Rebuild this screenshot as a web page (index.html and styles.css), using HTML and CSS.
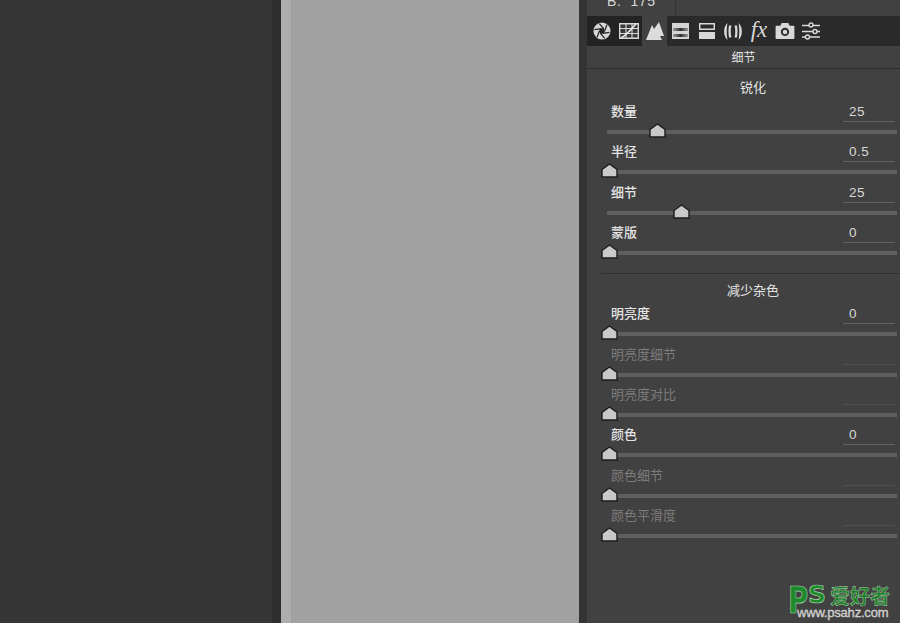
FILE: index.html
```html
<!DOCTYPE html>
<html lang="zh">
<head>
    <meta charset="UTF-8">
    <title>细节</title>
    <link rel="stylesheet" href="styles.css">
</head>
<body>
    <div class="left-area"></div>
    <div class="left-gutter"></div>
    <div class="canvas-edge"></div>
    <div class="canvas"></div>
    <div class="right-gutter"></div>

    <div class="panel">
        <!-- RGB readout -->
        <div class="readout"><span class="readout-text">B:&nbsp;&nbsp;175</span></div>

        <!-- Tabs -->
        <div class="tabs">
            <div class="tab tab-first">
                <svg width="18" height="18" viewBox="0 0 20 20">
                    <circle cx="10" cy="10" r="9.5" fill="#d8d8d8"/>
                    <circle cx="10" cy="10" r="3" fill="#242424"/>
                    <g stroke="#242424" stroke-width="1.3" fill="none">
                        <path d="M12 7.5L7 1.8M12.8 10.3L15.5 3M10.8 12.7L18.3 11.5M8 12.4L13 18.3M7.2 9.7L4.5 17M9.2 7.3L1.7 8.5"/>
                    </g>
                </svg>
            </div>
            <div class="tab tab-second">
                <svg width="20" height="16" viewBox="0 0 20 16">
                    <path d="M.7.7h18.6v14.6H.7z" fill="#3a3a3a" stroke="#d8d8d8" stroke-width="1.4"/>
                    <path d="M1 5.5h18M1 10.5h18M7 1v14M13 1v14" stroke="#d8d8d8" stroke-width="1.1"/>
                    <path d="M2 15C8 12 12 6 17 1" stroke="#eee" stroke-width="1.6" fill="none"/>
                </svg>
            </div>
            <div class="tab tab-active">
                <svg width="18" height="18" viewBox="0 0 18 18">
                    <path d="M0 18L6 3l2 4 5-7 5 14h-4l2 4z" fill="#dcdcdc"/>
                </svg>
            </div>
            <div class="tab tab-wide">
                <svg width="17" height="16" viewBox="0 0 17 16">
                    <defs>
                        <linearGradient id="hslBand" x1="0" y1="0" x2="1" y2="0">
                            <stop offset="0" stop-color="#9a9a9a"/>
                            <stop offset="0.5" stop-color="#2e2e2e"/>
                            <stop offset="1" stop-color="#9a9a9a"/>
                        </linearGradient>
                    </defs>
                    <rect width="17" height="16" fill="#d4d4d4"/>
                    <rect x="1" y="5" width="15" height="3" fill="url(#hslBand)"/>
                    <rect x="1" y="11" width="15" height="3" fill="url(#hslBand)"/>
                </svg>
            </div>
            <div class="tab">
                <svg width="16" height="16" viewBox="0 0 16 16">
                    <rect x="0.75" y="0.75" width="14.5" height="5.5" fill="#2a2a2a" stroke="#d8d8d8" stroke-width="1.5"/>
                    <rect y="9" width="16" height="7" fill="#d8d8d8"/>
                </svg>
            </div>
            <div class="tab">
                <svg width="18" height="17" viewBox="0 0 18 17" fill="#d8d8d8">
                    <path d="M3.5 0C-1 4-1 13 3.5 17 2.500 12 2.500 5 3.500 0z"/>
                    <path d="M14.500 0C19 4 19 13 14.500 17 15.500 12 15.500 5 14.500 0z"/>
                    <path d="M5 2.500h2.500C6.500 6 6.500 11 7.500 14.500H5C4.300 11 4.300 6 5 2.500z"/>
                    <path d="M13 2.500h-2.500c1 3.500 1 8.500 0 12H13c.7-3.500.7-8.500 0-12z"/>
                </svg>
            </div>
            <div class="tab tab-fx">fx</div>
            <div class="tab">
                <svg width="20" height="16" viewBox="0 0 20 17">
                    <path d="M1 3h4l1.500-3h7L15 3h4a1 1 0 0 1 1 1v12a1 1 0 0 1-1 1H1a1 1 0 0 1-1-1V4a1 1 0 0 1 1-1z" fill="#d8d8d8"/>
                    <circle cx="10" cy="9.500" r="4.400" fill="#2a2a2a"/>
                    <circle cx="10" cy="9.500" r="2.400" fill="#d8d8d8"/>
                </svg>
            </div>
            <div class="tab">
                <svg width="18" height="18" viewBox="0 0 18 18" fill="#2a2a2a" stroke="#d8d8d8" stroke-width="1.4">
                    <path d="M0 3.500h18M0 9.500h18M0 15h18"/>
                    <circle cx="9" cy="3" r="2"/>
                    <circle cx="13" cy="9.500" r="2"/>
                    <circle cx="5.500" cy="15" r="2"/>
                </svg>
            </div>
        </div>

        <div class="panel-title">细节</div>

        <!-- Sharpening -->
        <div class="group">
            <div class="group-title">锐化</div>
            <div class="row">
                <div class="row-head"><span class="label">数量</span><span class="value">25</span></div>
                <div class="track"><svg class="thumb" style="left: 42px" width="17" height="15" viewBox="0 0 17 15"><path d="M1 14V6.500L8.500 1 16 6.500V14z"/></svg></div>
            </div>
            <div class="row">
                <div class="row-head"><span class="label">半径</span><span class="value">0.5</span></div>
                <div class="track"><svg class="thumb" style="left: -6px" width="17" height="15" viewBox="0 0 17 15"><path d="M1 14V6.500L8.500 1 16 6.500V14z"/></svg></div>
            </div>
            <div class="row">
                <div class="row-head"><span class="label">细节</span><span class="value">25</span></div>
                <div class="track"><svg class="thumb" style="left: 66px" width="17" height="15" viewBox="0 0 17 15"><path d="M1 14V6.500L8.500 1 16 6.500V14z"/></svg></div>
            </div>
            <div class="row">
                <div class="row-head"><span class="label">蒙版</span><span class="value">0</span></div>
                <div class="track"><svg class="thumb" style="left: -6px" width="17" height="15" viewBox="0 0 17 15"><path d="M1 14V6.500L8.500 1 16 6.500V14z"/></svg></div>
            </div>
        </div>

        <div class="group-line"></div>

        <!-- Noise reduction -->
        <div class="group">
            <div class="group-title group-title-noise">减少杂色</div>
            <div class="row">
                <div class="row-head"><span class="label">明亮度</span><span class="value">0</span></div>
                <div class="track"><svg class="thumb" style="left: -6px" width="17" height="15" viewBox="0 0 17 15"><path d="M1 14V6.500L8.500 1 16 6.500V14z"/></svg></div>
            </div>
            <div class="row row-off">
                <div class="row-head"><span class="label">明亮度细节</span><span class="value"></span></div>
                <div class="track"><svg class="thumb" style="left: -6px" width="17" height="15" viewBox="0 0 17 15"><path d="M1 14V6.500L8.500 1 16 6.500V14z"/></svg></div>
            </div>
            <div class="row row-off">
                <div class="row-head"><span class="label">明亮度对比</span><span class="value"></span></div>
                <div class="track"><svg class="thumb" style="left: -6px" width="17" height="15" viewBox="0 0 17 15"><path d="M1 14V6.500L8.500 1 16 6.500V14z"/></svg></div>
            </div>
            <div class="row">
                <div class="row-head"><span class="label">颜色</span><span class="value">0</span></div>
                <div class="track"><svg class="thumb" style="left: -6px" width="17" height="15" viewBox="0 0 17 15"><path d="M1 14V6.500L8.500 1 16 6.500V14z"/></svg></div>
            </div>
            <div class="row row-off">
                <div class="row-head"><span class="label">颜色细节</span><span class="value"></span></div>
                <div class="track"><svg class="thumb" style="left: -6px" width="17" height="15" viewBox="0 0 17 15"><path d="M1 14V6.500L8.500 1 16 6.500V14z"/></svg></div>
            </div>
            <div class="row row-off">
                <div class="row-head"><span class="label">颜色平滑度</span><span class="value"></span></div>
                <div class="track"><svg class="thumb" style="left: -6px" width="17" height="15" viewBox="0 0 17 15"><path d="M1 14V6.500L8.500 1 16 6.500V14z"/></svg></div>
            </div>
        </div>

        <!-- Watermark -->
        <div class="watermark">
            <span class="wm-p">P</span>
            <span class="wm-s">S</span>
            <span class="wm-cn">爱好者</span>
            <span class="wm-url">www.psahz.com</span>
        </div>
    </div>
</body>
</html>
```

FILE: styles.css
```css
html, body {
    margin: 0;
    padding: 0;
    height: 100%;
    overflow: hidden;
}

body {
    display: flex;
    font-family: "Liberation Sans", "Noto Sans CJK SC", sans-serif;
    background: #353435;
}

/* Background columns */
.left-area {
    width: 272px;
    background: #363536;
}

.left-gutter {
    width: 9px;
    background: #2d2d2d;
}

.canvas-edge {
    width: 10px;
    background: #adadad;
}

.canvas {
    width: 288px;
    background: #a1a1a1;
}

.right-gutter {
    width: 8px;
    background: #343434;
}

/* Panel */
.panel {
    position: relative;
    flex: 1;
    background: #414141;
    color: #e4e4e4;
}

.readout {
    height: 16px;
    overflow: hidden;
}

.readout-text {
    display: block;
    width: 89px;
    height: 24px;
    padding-left: 20px;
    box-sizing: border-box;
    margin-top: -8px;
    font-size: 14px;
    line-height: 18px;
    letter-spacing: 0.6px;
    color: #d8d8d8;
    border-right: 1px solid #363636;
}

.tabs {
    display: flex;
    height: 30px;
    background: #2a2a2a;
}

.tab {
    width: 26px;
    display: flex;
    align-items: center;
    justify-content: center;
    flex-shrink: 0;
}

.tab-first {
    width: 28px;
    padding-left: 2px;
    box-sizing: border-box;
    background: #232323;
}

.tab-second {
    width: 27px;
    background: #232323;
}

.tab-wide {
    width: 27px;
}

.tab-active {
    width: 25px;
    background: #414141;
}

.tab-fx {
    font-family: "Liberation Serif", serif;
    font-style: italic;
    font-size: 23px;
    color: #d8d8d8;
    padding-bottom: 2px;
    height: 28px;
}

.panel-title {
    height: 22px;
    line-height: 21px;
    text-align: center;
    font-size: 12px;
    font-family: "Noto Sans CJK SC", sans-serif;
    border-bottom: 1px solid #2c2c2c;
}

.group-title {
    height: 33px;
    line-height: 36px;
    padding-left: 166px;
    width: 0;
    white-space: nowrap;
    text-indent: -13px;
    font-size: 13px;
    font-family: "Noto Sans CJK SC", sans-serif;
}

.group-title-noise {
    height: 30px;
    line-height: 32px;
    text-indent: -26px;
}

.group-line {
    height: 1px;
    margin: 10px 0 0 14px;
    background: #303030;
}

.row {
    height: 40.33px;
    padding: 0 3px 0 20px;
}

.row-head {
    display: flex;
    justify-content: space-between;
    height: 20px;
    padding-left: 4px;
}

.label {
    font-size: 13px;
    line-height: 18px;
    font-family: "Noto Sans CJK SC", sans-serif;
    font-weight: 500;
}

.value {
    width: 46px;
    margin-right: 2px;
    padding-left: 6px;
    font-size: 13.5px;
    line-height: 20px;
    color: #d8d8d8;
    border-bottom: 1px solid #626262;
    letter-spacing: 0.5px;
}

.row-off .label {
    color: #7c7c7c;
    font-weight: 400;
}

.row-off .value {
    border-bottom-color: #4e4e4e;
}

.track {
    position: relative;
    height: 4px;
    margin-top: 8px;
    background: #5f5f5f;
}

.thumb {
    position: absolute;
    top: -7px;
    fill: #c9c9c9;
    stroke: #1c1c1c;
    stroke-width: 1.4;
}

/* Watermark */
.watermark {
    position: absolute;
    left: 201px;
    top: 580px;
    width: 110px;
    height: 42px;
}

.wm-p {
    position: absolute;
    left: 0;
    top: 0;
    font-family: "DejaVu Sans", sans-serif;
    font-weight: bold;
    font-size: 37px;
    line-height: 42px;
    transform: scaleX(0.75);
    transform-origin: left;
    color: #1f8a2c;
    -webkit-text-stroke: 0.7px #a9d0a9;
}

.wm-s {
    position: absolute;
    left: 20px;
    top: 4px;
    font-family: "DejaVu Sans", sans-serif;
    font-weight: bold;
    font-size: 25px;
    line-height: 22px;
    color: #1f8a2c;
    -webkit-text-stroke: 0.7px #a9d0a9;
}

.wm-cn {
    position: absolute;
    left: 42px;
    top: 5px;
    font-family: "Noto Sans CJK SC", sans-serif;
    font-weight: bold;
    font-size: 20px;
    line-height: 21px;
    color: #1d7a28;
    -webkit-text-stroke: 0.5px #a9cfa9;
}

.wm-url {
    position: absolute;
    left: 9px;
    top: 27px;
    font-size: 13px;
    line-height: 11px;
    letter-spacing: -0.2px;
    color: #c4c4c4;
    -webkit-text-stroke: 0.3px #e0e0e0;
}
```
